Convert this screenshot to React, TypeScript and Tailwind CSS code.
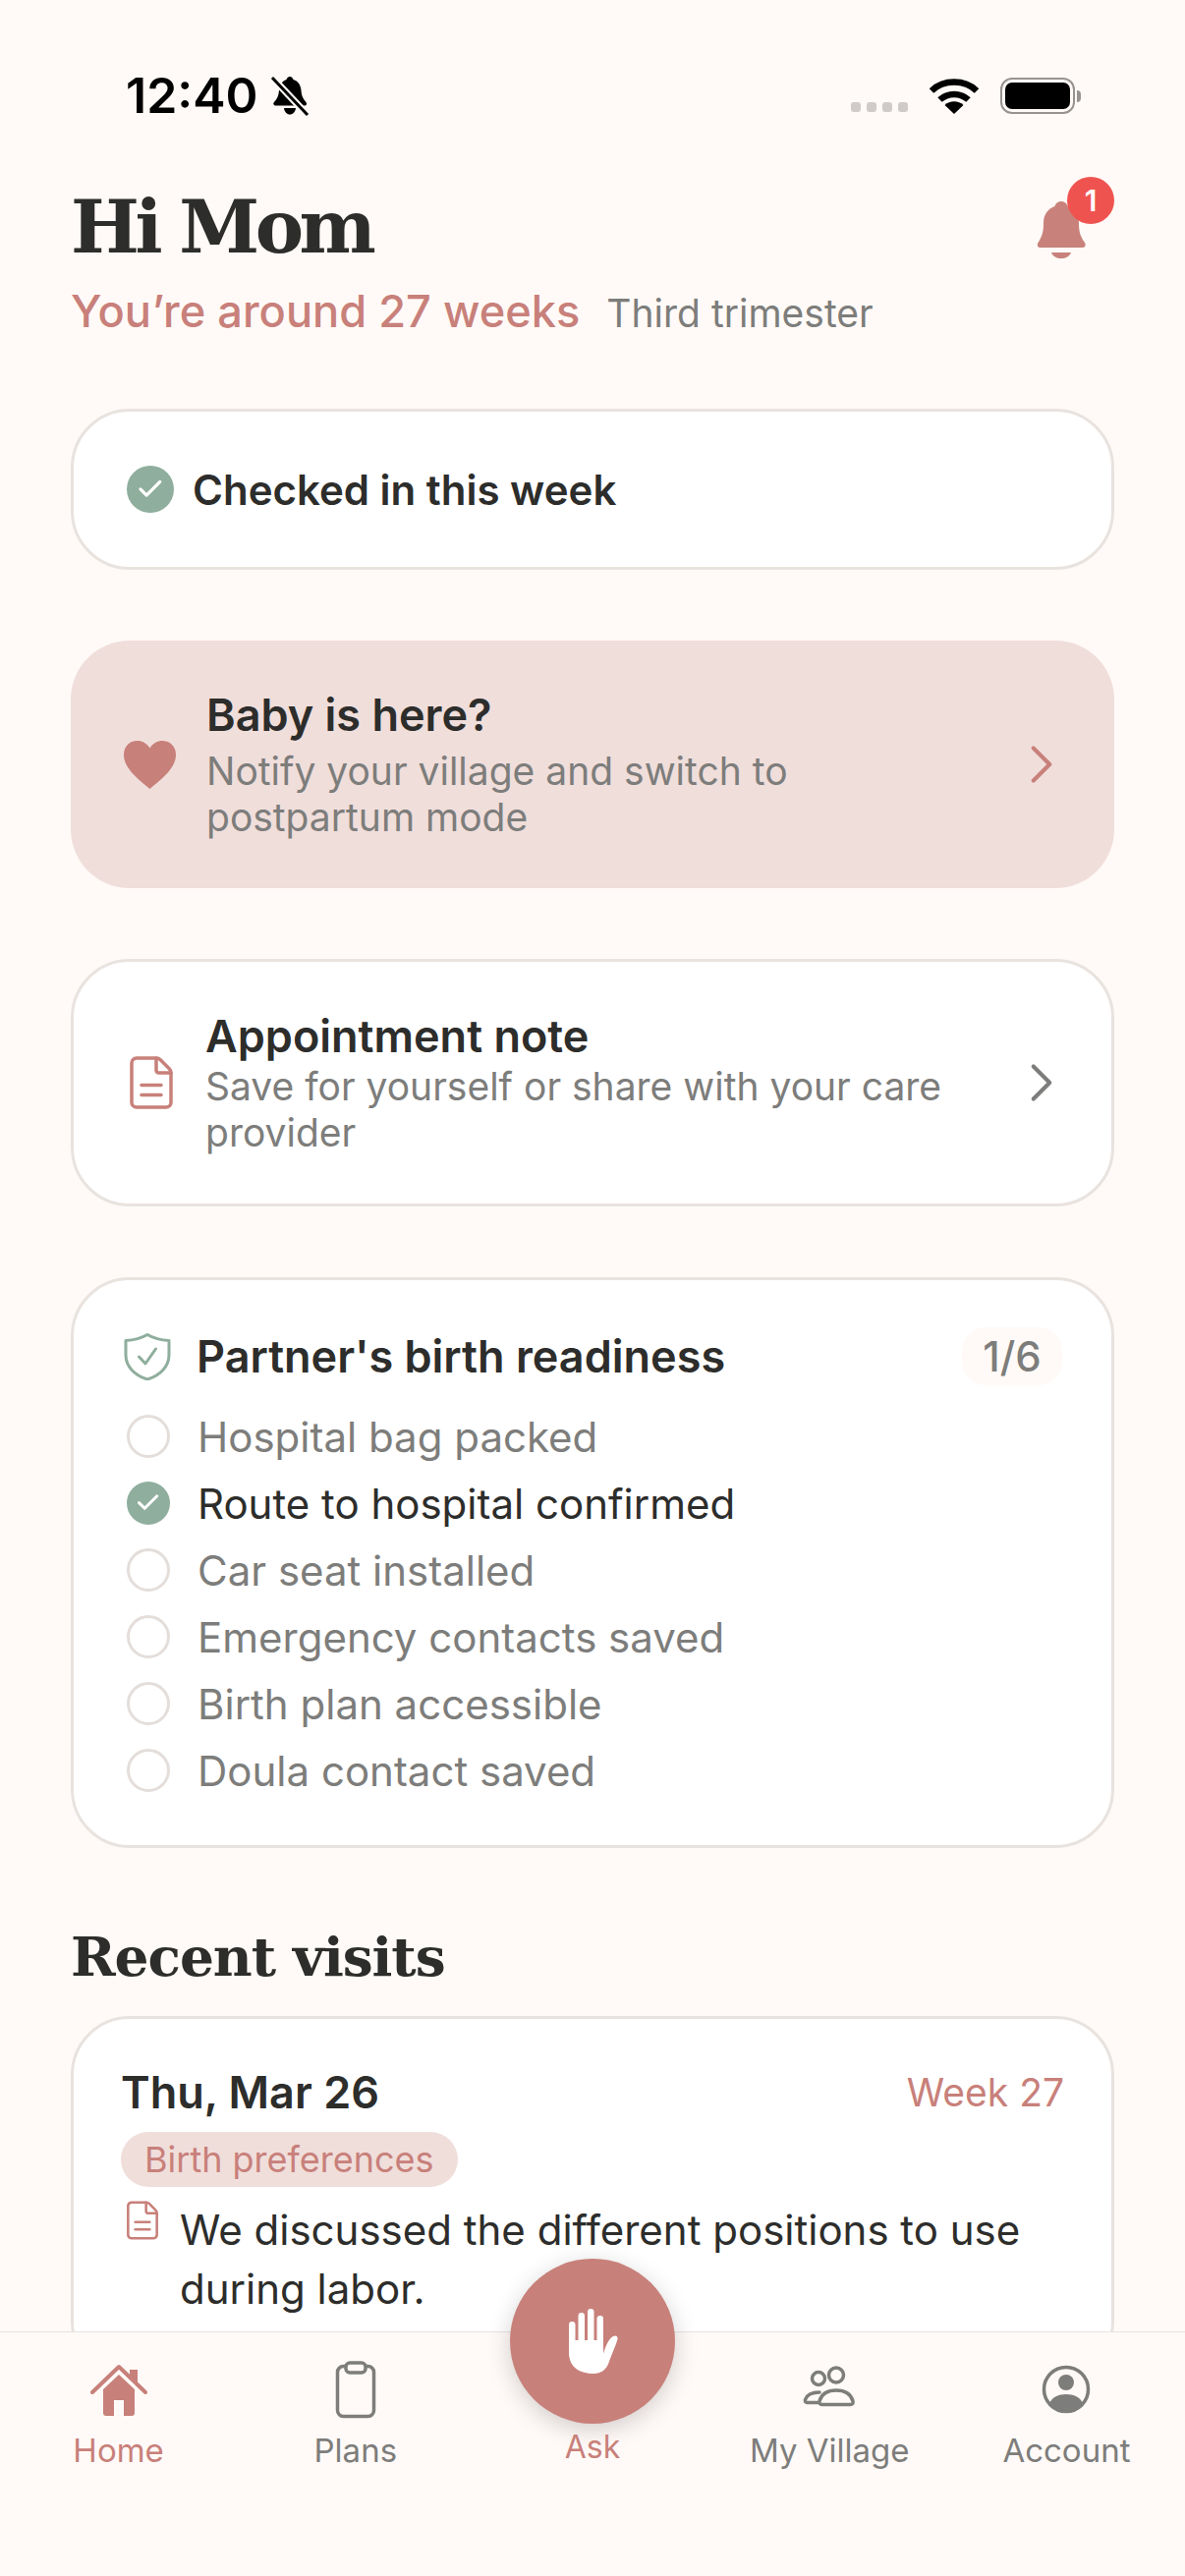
import React from "react";
import { ChevronRight, Check } from "lucide-react";

const checklist = [
  { label: "Hospital bag packed", done: false },
  { label: "Route to hospital confirmed", done: true },
  { label: "Car seat installed", done: false },
  { label: "Emergency contacts saved", done: false },
  { label: "Birth plan accessible", done: false },
  { label: "Doula contact saved", done: false },
];

function SilentBell() {
  return (
    <svg width="40" height="42" viewBox="0 0 40 42" fill="none">
      <path d="M20 1c2 0 3 1.500 3.500 3 5 1.500 7.500 5.500 8 11 .4 5 1.500 8 5 12 1.200 1.500.5 3.500-1.500 3.500H6c-2.500 0-3.500-2-2-3.500 3.500-4 4.500-7 5-12 .5-5.500 3-9.500 7.500-11C17 2.500 18 1 20 1Z" fill="#000" />
      <path d="M14 33h12c-.5 4-3 6.500-6 6.500S14.500 37 14 33Z" fill="#000" />
      <path d="M3 3l34 36" stroke="#fffaf7" strokeWidth="7" />
      <path d="M2 2l36 38" stroke="#000" strokeWidth="3" />
    </svg>
  );
}

function Wifi() {
  return (
    <svg width="50" height="37" viewBox="0 0 50 37" fill="none">
      <path d="M2 13.500C14 1.500 36 1.500 48 13.500" stroke="#000" strokeWidth="6.500" />
      <path d="M10.500 22.500c8-7.500 21-7.500 29 0" stroke="#000" strokeWidth="6.500" />
      <path d="M25 37l-9.500-9c5-5 14-5 19 0L25 37Z" fill="#000" />
    </svg>
  );
}

function NotifBell() {
  return (
    <svg width="50" height="58" viewBox="0 0 50 58" fill="none">
      <path d="M25 0c3.500 0 6 2.500 6.500 5C38 7 43 13 43 22c0 8 1 13 6 20 1.500 2.500.5 5-2.500 5h-43C1 47 0 44.500 1.500 42 6 35 7 30 7 22 7 13 12 7 18.500 5 19 2.500 21.500 0 25 0Z" fill="#c8827b" />
      <path d="M15 52h20c-1.500 4-5.500 6-10 6s-8.500-2-10-6Z" fill="#c8827b" />
    </svg>
  );
}

function Heart() {
  return (
    <svg width="53" height="49" viewBox="0 0 53 49" className="shrink-0">
      <path d="M26.500 49C12 37 0 27 0 14 0 6 6 0 13.500 0c5.500 0 10 2.500 13 7.500C29.500 2.500 34 0 39.500 0 47 0 53 6 53 14c0 13-12 23-26.500 35Z" fill="#c8807a" />
    </svg>
  );
}

function DocIcon({ size, className }: { size: number; className?: string }) {
  return (
    <svg width={size} height={size} viewBox="0 0 24 24" fill="none" stroke="#c8807a" strokeWidth="1.400" strokeLinecap="round" strokeLinejoin="round" className={className}>
      <path d="M6 22a2 2 0 0 1-2-2V4a2 2 0 0 1 2-2h8a2.400 2.400 0 0 1 1.700.7l3.600 3.600A2.400 2.400 0 0 1 20 8v12a2 2 0 0 1-2 2Z" />
      <path d="M14 2v5a1 1 0 0 0 1 1h5" />
      <path d="M16 13H8" />
      <path d="M16 17H8" />
    </svg>
  );
}

function Shield() {
  return (
    <svg width="48" height="48" viewBox="0 0 48 48" fill="none" stroke="#8fae9d" strokeWidth="3" strokeLinejoin="round" strokeLinecap="round" className="shrink-0">
      <path d="M24 1.500C30 5 38 7 46 7.500V22c0 12-9 21-22 25C11 43 2 34 2 22V7.500C10 7 18 5 24 1.500Z" />
      <path d="M15.500 24l6.500 7 10.500-15" />
    </svg>
  );
}

function SageCheck({ size }: { size: number }) {
  return (
    <span
      className="flex shrink-0 items-center justify-center rounded-full bg-[#8fae9d]"
      style={{ width: size, height: size }}
    >
      <Check size={size * 0.62} color="#fff" strokeWidth={2.6} />
    </span>
  );
}

function HomeIcon() {
  return (
    <svg width="60" height="60" viewBox="0 0 60 60" fill="none">
      <path d="M14 30L30 15l16 15v24c0 2-1 3-3 3h-8V41H25v16h-8c-2 0-3-1-3-3V30Z" fill="#c8807a" />
      <path d="M3 33L30 7l27 26" stroke="#c8807a" strokeWidth="4" strokeLinecap="round" strokeLinejoin="round" />
      <path d="M41 10h8v16l-8-8v-8Z" fill="#c8807a" />
    </svg>
  );
}

function ClipboardIcon() {
  return (
    <svg width="60" height="60" viewBox="0 0 60 60" fill="none">
      <rect x="11.500" y="6.500" width="37" height="51" rx="6" stroke="#7d7d7b" strokeWidth="3.500" />
      <rect x="20" y="3" width="20" height="10" rx="4" fill="#fffaf7" stroke="#7d7d7b" strokeWidth="3.500" />
    </svg>
  );
}

function VillageIcon() {
  return (
    <svg width="60" height="60" viewBox="2 0 60 60" fill="none">
      <circle cx="21" cy="19" r="6.500" stroke="#7d7d7b" strokeWidth="3.500" />
      <circle cx="39" cy="15.500" r="7.500" stroke="#7d7d7b" strokeWidth="3.500" />
      <path d="M22 33c-8 0-13 3-14.500 7.500-.5 2 .5 3 2 3H20" stroke="#7d7d7b" strokeWidth="3.500" strokeLinecap="round" />
      <path d="M39 31c-9 0-15 4-17 11-.5 2 .5 3.500 2.500 3.500h29c2 0 3-1.500 2.500-3.500-2-7-8-11-17-11Z" stroke="#7d7d7b" strokeWidth="3.500" />
    </svg>
  );
}

function AccountIcon() {
  return (
    <svg width="60" height="60" viewBox="0 0 60 60" fill="none">
      <circle cx="30" cy="30" r="22.500" stroke="#7d7d7b" strokeWidth="3.500" />
      <circle cx="30" cy="23" r="8" fill="#7d7d7b" />
      <path d="M13 44c3-6 9-9 17-9s14 3 17 9c-4 5-10 8-17 8s-13-3-17-8Z" fill="#7d7d7b" />
    </svg>
  );
}

function HandIcon() {
  return (
    <svg width="51" height="66" viewBox="0 0 51 66" fill="#fff">
      <rect x="1" y="13" width="6.500" height="36" rx="3.250" />
      <rect x="10.500" y="4" width="6.500" height="40" rx="3.250" />
      <rect x="20" y="0" width="6.500" height="44" rx="3.250" />
      <rect x="29.500" y="7" width="6.500" height="40" rx="3.250" />
      <path d="M1 32h35v14c2-7 5-15 10-18 3-1.500 5 .5 4.500 3-2 7-6 15-9 24-2.500 7-8 11-15 11C12 66 1 60 1 44V32Z" />
    </svg>
  );
}

function NavItem({ icon, label, active }: { icon: React.ReactNode; label: string; active?: boolean }) {
  return (
    <div className="flex flex-1 flex-col items-center">
      <div className="flex h-[60px] items-center justify-center">{icon}</div>
      <span className={`mt-[10px] text-[33px] leading-[44px] ${active ? "text-[#c8807a]" : "text-[#7d7d7b]"}`}>
        {label}
      </span>
    </div>
  );
}

export default function App() {
  return (
    <div className="relative h-[2622px] w-[1206px] overflow-hidden bg-[#fffaf7] font-['Inter',sans-serif] text-[#2d2d2b]">
      {/* status bar */}
      <div className="flex h-[37px] translate-y-[79px] items-center justify-between pl-[128px] pr-[106px]">
        <div className="flex items-center gap-[12px]">
          <span className="text-[50px] font-semibold leading-[37px] text-black">12:40</span>
          <SilentBell />
        </div>
        <div className="flex items-center">
          <div className="mr-[22px] mt-[22px] flex gap-[6px]">
            <span className="h-[10px] w-[10px] rounded-[3px] bg-[#cfcbc8]" />
            <span className="h-[10px] w-[10px] rounded-[3px] bg-[#cfcbc8]" />
            <span className="h-[10px] w-[10px] rounded-[3px] bg-[#cfcbc8]" />
            <span className="h-[10px] w-[10px] rounded-[3px] bg-[#cfcbc8]" />
          </div>
          <Wifi />
          <div className="ml-[22px] flex items-center">
            <div className="h-[37px] w-[76px] rounded-[12px] border-[2.500px] border-[#979391] p-[3px]">
              <div className="h-full w-full rounded-[7px] bg-black" />
            </div>
            <div className="ml-[2px] h-[12px] w-[4px] rounded-r-full bg-[#979391]" />
          </div>
        </div>
      </div>

      <main className="px-[72px] pt-[156px]">
        <header className="flex items-start justify-between">
          <h1 className="font-['DejaVu_Serif',serif] text-[74px] font-bold leading-[76px] tracking-[-4.500px]">Hi Mom</h1>
          <div className="relative mr-[29px] mt-[12px]">
            <NotifBell />
            <span className="absolute -right-[29px] -top-[25px] flex h-[48px] w-[48px] items-center justify-center rounded-full bg-[#ef5350] text-[30px] font-semibold text-white">
              1
            </span>
          </div>
        </header>
        <div className="mt-[24px] flex items-baseline gap-[27px]">
          <span className="text-[45.200px] font-medium leading-[48px] text-[#c8807a]">You’re around 27 weeks</span>
          <span className="text-[39px] leading-[48px] text-[#7d7d7b]">Third trimester</span>
        </div>

        <section className="mt-[73px] flex h-[164px] items-center gap-[19px] rounded-[60px] border-[3px] border-[#e9e3df] bg-white pl-[54px]">
          <SageCheck size={48} />
          <span className="text-[42px] font-semibold">Checked in this week</span>
        </section>

        <section className="mt-[72px] flex h-[252px] items-center rounded-[60px] bg-[#f0dedb] pl-[54px] pr-[41px]">
          <Heart />
          <div className="ml-[31px] flex-1">
            <div className="text-[45px] font-semibold leading-[54px]">Baby is here?</div>
            <p className="mt-[6px] w-[640px] text-[39px] leading-[47px] text-[#7d7d7b]">
              Notify your village and switch to postpartum mode
            </p>
          </div>
          <ChevronRight size={66} color="#c8807a" strokeWidth={1.5} />
        </section>

        <section className="mt-[72px] flex h-[252px] items-center rounded-[60px] border-[3px] border-[#e9e3df] bg-white pl-[49px] pr-[38px]">
          <DocIcon size={60} className="shrink-0" />
          <div className="ml-[25px] flex-1">
            <div className="text-[45px] font-semibold leading-[54px]">Appointment note</div>
            <p className="w-[760px] text-[39px] leading-[47px] text-[#7d7d7b]">
              Save for yourself or share with your care provider
            </p>
          </div>
          <ChevronRight size={66} color="#7d7d7b" strokeWidth={1.5} />
        </section>

        <section className="mt-[72px] rounded-[60px] border-[3px] border-[#e9e3df] bg-white pb-[42px] pl-[51px] pr-[50px] pt-[48px]">
          <div className="flex h-[59px] items-center">
            <span className="mr-[26px]">
              <Shield />
            </span>
            <span className="flex-1 text-[45px] font-semibold">Partner's birth readiness</span>
            <span className="flex h-[59px] w-[102px] items-center justify-center rounded-[24px] bg-[#fffaf7] text-[42px] font-medium text-[#7d7d7b]">
              1/6
            </span>
          </div>
          <ul className="mt-[18px]">
            {checklist.map((item) => (
              <li key={item.label} className="flex h-[68px] items-center">
                {item.done ? (
                  <span className="ml-[3px]">
                    <SageCheck size={44} />
                  </span>
                ) : (
                  <span className="ml-[3px] h-[44px] w-[44px] shrink-0 rounded-full border-[3px] border-[#e4dedb]" />
                )}
                <span className={`ml-[28px] text-[42px] ${item.done ? "text-[#2d2d2b]" : "text-[#7d7d7b]"}`}>{item.label}</span>
              </li>
            ))}
          </ul>
        </section>

        <h2 className="mt-[76px] font-['DejaVu_Serif',serif] text-[55px] font-bold leading-[70px] tracking-[-1.100px]">Recent visits</h2>

        <section className="mt-[25px] rounded-[60px] border-[3px] border-[#e9e3df] bg-white px-[48px] pt-[48px] pb-[60px]">
          <div className="flex items-center justify-between">
            <span className="text-[45px] font-semibold leading-[54px]">Thu, Mar 26</span>
            <span className="text-[39px] leading-[54px] text-[#c8807a]">Week 27</span>
          </div>
          <span className="mt-[13px] inline-flex h-[56px] items-center rounded-full bg-[#f0dedb] px-[24px] text-[36px] text-[#c8807a]">
            Birth preferences
          </span>
          <div className="mt-[14px] flex">
            <DocIcon size={44} className="mr-[16px] -mt-[2px] shrink-0" />
            <p className="text-[42px] leading-[60px]">We discussed the different positions to use during labor.</p>
          </div>
        </section>
      </main>

      {/* bottom nav sits over the scrolled content */}
      <nav className="absolute inset-x-0 bottom-0 flex h-[249px] items-start border-t-[1.500px] border-[#e8e3e0] bg-[#fffaf7] pt-[28px]">
        <NavItem icon={<HomeIcon />} label="Home" active />
        <NavItem icon={<ClipboardIcon />} label="Plans" />
        <div className="-mt-[103px] flex flex-1 flex-col items-center">
          <button className="flex h-[168px] w-[168px] items-center justify-center rounded-full bg-[#c8807a] shadow-[0_6px_24px_rgba(0,0,0,0.18)]">
            <HandIcon />
          </button>
          <span className="mt-[4px] text-[32px] leading-[40px] text-[#c8807a]">Ask</span>
        </div>
        <NavItem icon={<VillageIcon />} label="My Village" />
        <NavItem icon={<AccountIcon />} label="Account" />
      </nav>
    </div>
  );
}
